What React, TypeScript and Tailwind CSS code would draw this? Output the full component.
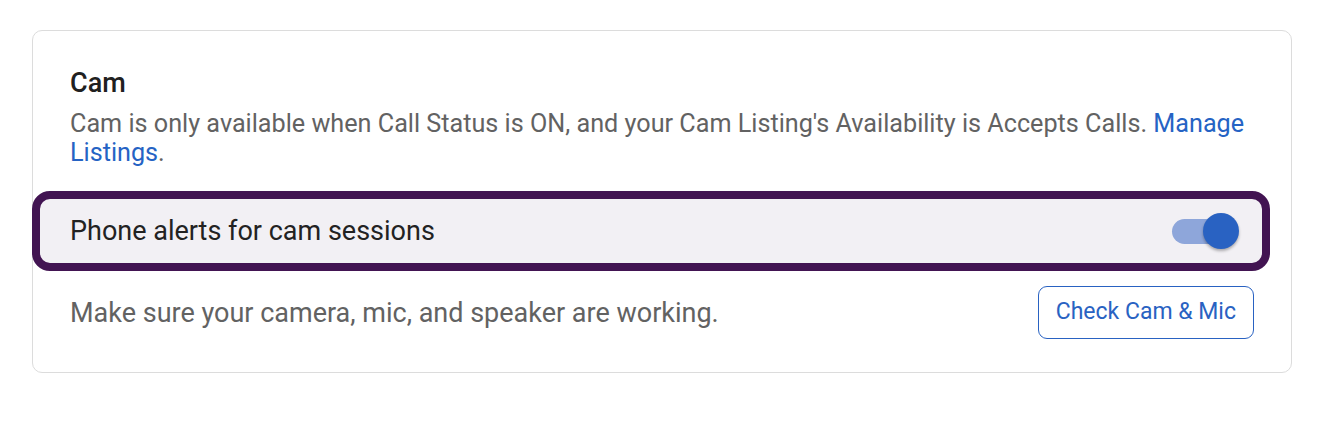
import { useState } from "react";

export default function App() {
  const [alertsOn, setAlertsOn] = useState(true);

  return (
    <div className="min-h-[440px] bg-white pl-[32px] pt-[30px] font-['Roboto','Liberation_Sans',sans-serif]">
      <div className="w-[1260px] rounded-[10px] border border-[#dcdcdc] bg-white px-[37px] pt-[36px] pb-[33px]">
        {/* Header */}
        <h2 className="text-[27px] leading-[32px] font-medium text-[#202020]">Cam</h2>
        <p className="mt-[10px] text-[25.2px] leading-[29px] text-[#626262]">
          Cam is only available when Call Status is ON, and your Cam Listing's Availability is Accepts Calls.{" "}
          <a href="#" className="text-[#2563c4]">
            Manage Listings
          </a>
          .
        </p>

        {/* Focused toggle row */}
        <div className="mt-[24px] -ml-[38px] -mr-[16px] flex h-[80px] items-center justify-between rounded-[18px] border-[8px] border-[#421452] bg-[#f2f0f4] pl-[30px] pr-[23px]">
          <span className="text-[27px] leading-[32px] text-[#222222]">Phone alerts for cam sessions</span>
          <button
            type="button"
            role="switch"
            aria-checked={alertsOn}
            onClick={() => setAlertsOn(!alertsOn)}
            className="relative h-[36px] w-[68px]"
          >
            <span
              className={
                "absolute left-[1px] top-[6px] h-[25px] w-[58px] rounded-full " +
                (alertsOn ? "bg-[#8ea6da]" : "bg-[#c4c4c4]")
              }
            />
            <span
              className={
                "absolute top-0 h-[36px] w-[36px] rounded-full shadow-[0_2px_3px_rgba(0,0,0,0.3)] " +
                (alertsOn ? "left-[32px] bg-[#2962c2]" : "left-[-4px] bg-white")
              }
            />
          </button>
        </div>

        {/* Device check */}
        <div className="mt-[15px] flex items-center justify-between">
          <span className="text-[27px] leading-[32px] text-[#626262]">
            Make sure your camera, mic, and speaker are working.
          </span>
          <button
            type="button"
            className="h-[53px] rounded-[9px] border border-[#2962c2] px-[17px] text-[23px] text-[#2962c2]"
          >
            Check Cam &amp; Mic
          </button>
        </div>
      </div>
    </div>
  );
}
